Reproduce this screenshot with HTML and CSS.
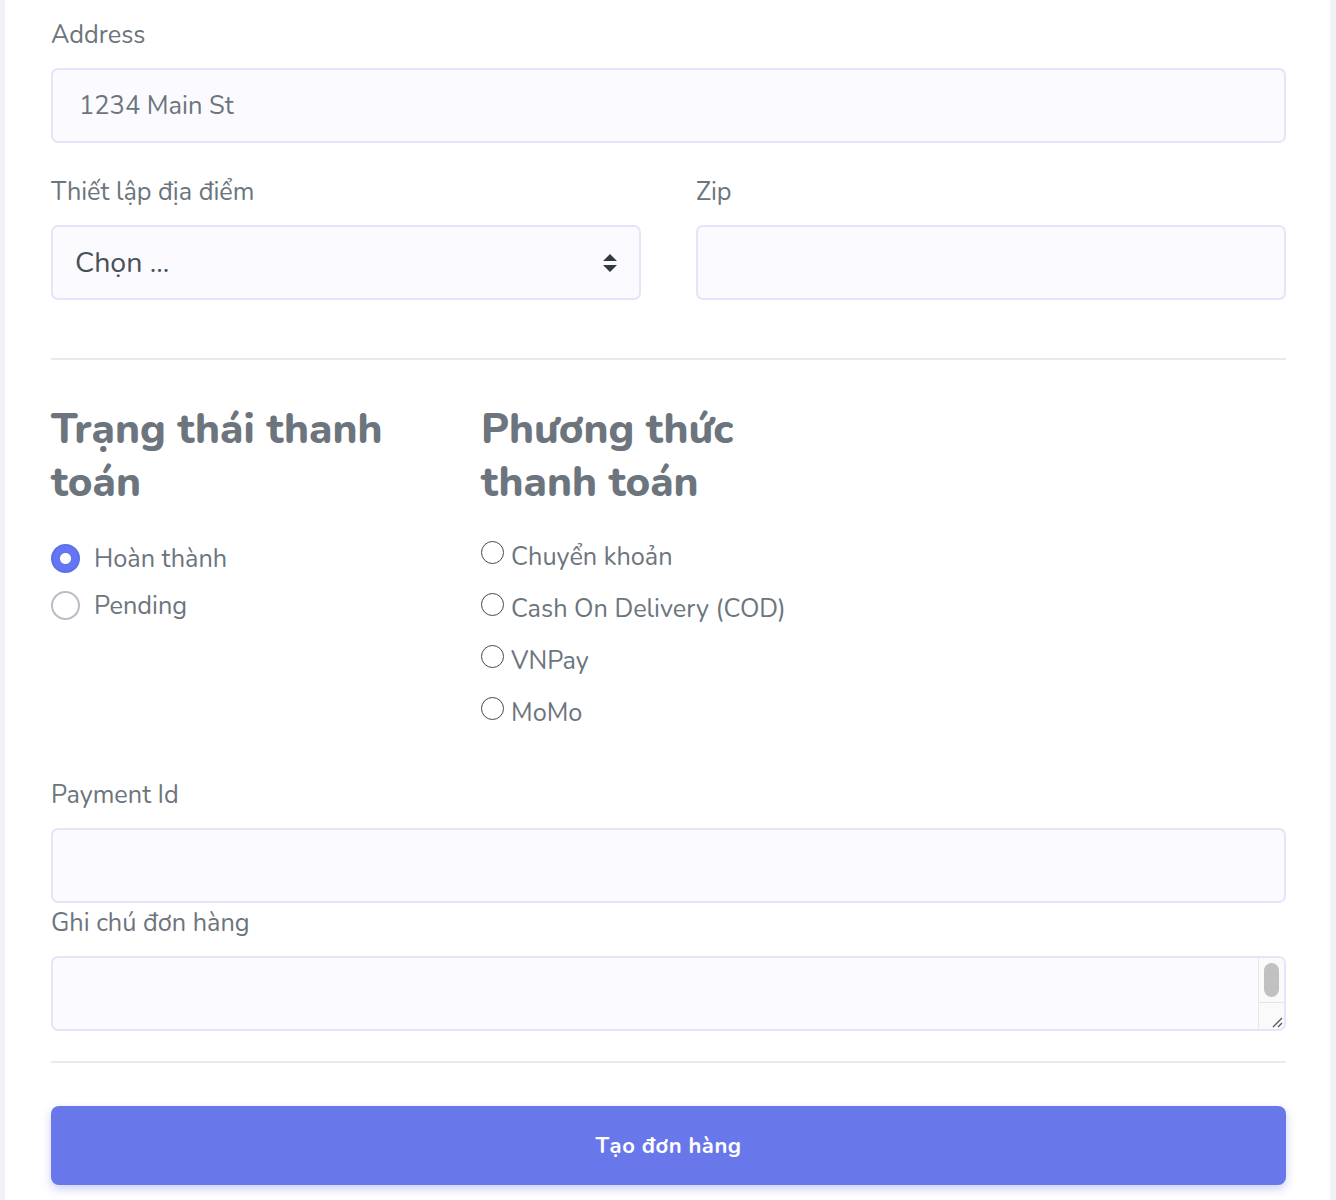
FILE: index.html
```html
<!DOCTYPE html>
<html lang="vi">
<head>
<meta charset="utf-8">
<title>Tạo đơn hàng</title>
<link rel="stylesheet" href="styles.css">
</head>
<body>
<div class="page">
  <form class="card">
    <div class="group">
      <label class="label">Address</label>
      <input class="control" type="text" value="1234 Main St">
    </div>
    <div class="row2">
      <div class="group">
        <label class="label">Thiết lập địa điểm</label>
        <div class="select">
          <span>Chọn ...</span>
          <svg class="arrows" width="16" height="20" viewBox="0 0 16 20"><path d="M8 1 L15 8 H1 Z M1 12 H15 L8 19 Z" fill="#343a40"/></svg>
        </div>
      </div>
      <div class="group">
        <label class="label">Zip</label>
        <input class="control" type="text">
      </div>
    </div>
    <hr class="sep sep-top">
    <div class="cols">
      <div class="col">
        <h3 class="heading">Trạng thái thanh<br>toán</h3>
        <div class="status-list">
          <label class="status"><input type="radio" name="st" class="radio-lg" checked><span>Hoàn thành</span></label>
          <label class="status"><input type="radio" name="st" class="radio-lg"><span>Pending</span></label>
        </div>
      </div>
      <div class="col">
        <h3 class="heading">Phương thức<br>thanh toán</h3>
        <div class="method-list">
          <label class="method"><input type="radio" name="pm" class="radio-sm"><span>Chuyển khoản</span></label>
          <label class="method"><input type="radio" name="pm" class="radio-sm"><span>Cash On Delivery (COD)</span></label>
          <label class="method"><input type="radio" name="pm" class="radio-sm"><span>VNPay</span></label>
          <label class="method"><input type="radio" name="pm" class="radio-sm"><span>MoMo</span></label>
        </div>
      </div>
    </div>
    <div class="group group-pay">
      <label class="label">Payment Id</label>
      <input class="control" type="text">
    </div>
    <div class="group group-note">
      <label class="label">Ghi chú đơn hàng</label>
      <div class="note-wrap">
        <textarea class="control note"></textarea>
        <div class="fake-scroll">
          <div class="fs-track"><div class="fs-thumb"></div></div>
          <div class="fs-corner">
            <svg width="14" height="14" viewBox="0 0 14 14"><path d="M13 4 L4 13 M13 9 L9 13" stroke="#555" stroke-width="1.3" fill="none"/></svg>
          </div>
        </div>
      </div>
    </div>
    <hr class="sep sep-bottom">
    <button type="button" class="submit">Tạo đơn hàng</button>
  </form>
</div>
</body>
</html>
```

FILE: styles.css
```css
* { box-sizing: border-box; }
html, body { margin: 0; padding: 0; }
body {
  background: #f1f2f6;
  font-family: "Nunito", "Noto Sans", "Open Sans", sans-serif;
  color: #6c757d;
}
.page {
  padding: 0 6px 0 5px;
}
.card {
  background: #ffffff;
  padding: 16px 44px 40px 46px;
  min-height: 1200px;
}
.group {
  display: flex;
  flex-direction: column;
}
.label {
  font-size: 25.3px;
  line-height: 38px;
  color: #6c757d;
  margin-bottom: 14px;
}
.control {
  height: 75px;
  border: 2px solid #e3e5fb;
  border-radius: 7px;
  background: #fbfbff;
  font-family: inherit;
  font-size: 25.5px;
  color: #6c757d;
  padding: 0 26px;
  outline: none;
}
.row2 {
  display: grid;
  grid-template-columns: 1fr 1fr;
  column-gap: 55px;
  margin-top: 30px;
}
.select {
  height: 75px;
  border: 2px solid #e3e5fb;
  border-radius: 7px;
  background: #fbfbff;
  display: flex;
  align-items: center;
  justify-content: space-between;
  padding: 0 21px 0 22px;
  font-size: 28.5px;
  color: #495057;
}
.arrows { display: block; }
.sep {
  border: 0;
  border-top: 2px solid #e9eaee;
  margin: 0;
}
.sep-top { margin-top: 58px; }
.cols {
  display: grid;
  grid-template-columns: 430px 430px;
  margin-top: 43px;
}
.heading {
  margin: 0;
  font-size: 42px;
  line-height: 53px;
  font-weight: 800;
  color: #6c757d;
}
.status-list {
  margin-top: 26px;
  display: flex;
  flex-direction: column;
}
.status {
  display: flex;
  align-items: center;
  height: 47px;
  font-size: 25.3px;
  color: #6c757d;
}
.radio-lg {
  appearance: none;
  -webkit-appearance: none;
  width: 29px;
  height: 29px;
  margin: 0 14px 0 0;
  border: 2px solid #b9bec5;
  border-radius: 50%;
  background: #fff;
}
.radio-lg:checked {
  border: 2px solid #5c6ff0;
  background: radial-gradient(circle, #ffffff 0 5px, #6277f0 6px);
}
.method-list {
  margin-top: 20px;
  display: flex;
  flex-direction: column;
}
.method {
  display: flex;
  align-items: center;
  height: 52px;
  font-size: 25.3px;
  color: #6c757d;
}
.method span { margin-top: 2px; }
.radio-sm {
  appearance: none;
  -webkit-appearance: none;
  width: 23px;
  height: 23px;
  margin: -6px 7px 0 0;
  border: 1.5px solid #444a50;
  border-radius: 50%;
  background: #fff;
}
.group-pay { margin-top: 39px; }
.group-note { margin-top: 1px; }
.note-wrap {
  position: relative;
  display: flex;
  flex-direction: column;
}
.note {
  resize: none;
  padding-top: 10px;
}
.fake-scroll {
  position: absolute;
  top: 2px;
  right: 2px;
  bottom: 2px;
  width: 26px;
  border-left: 1px solid #e8e8e8;
  background: #fafafa;
  border-radius: 0 5px 5px 0;
  display: flex;
  flex-direction: column;
}
.fs-track {
  flex: 1;
  padding: 5px 0 5px 5px;
  border-bottom: 1px solid #e4e4e4;
}
.fs-thumb {
  width: 15px;
  height: 34px;
  border-radius: 8px;
  background: #c1c1c1;
}
.fs-corner {
  height: 27px;
  display: flex;
  align-items: flex-end;
  justify-content: flex-end;
  padding: 0 1px 1px 0;
}
.fs-corner svg { display: block; }
.sep-bottom { margin-top: 30px; }
.submit {
  display: block;
  width: 100%;
  margin-top: 43px;
  height: 79px;
  border: 0;
  border-radius: 8px;
  background: #6878ea;
  color: #ffffff;
  font-family: inherit;
  font-size: 22px;
  font-weight: 700;
  letter-spacing: 0.5px;
  box-shadow: 0 4px 10px rgba(104, 120, 234, 0.35);
}
```
